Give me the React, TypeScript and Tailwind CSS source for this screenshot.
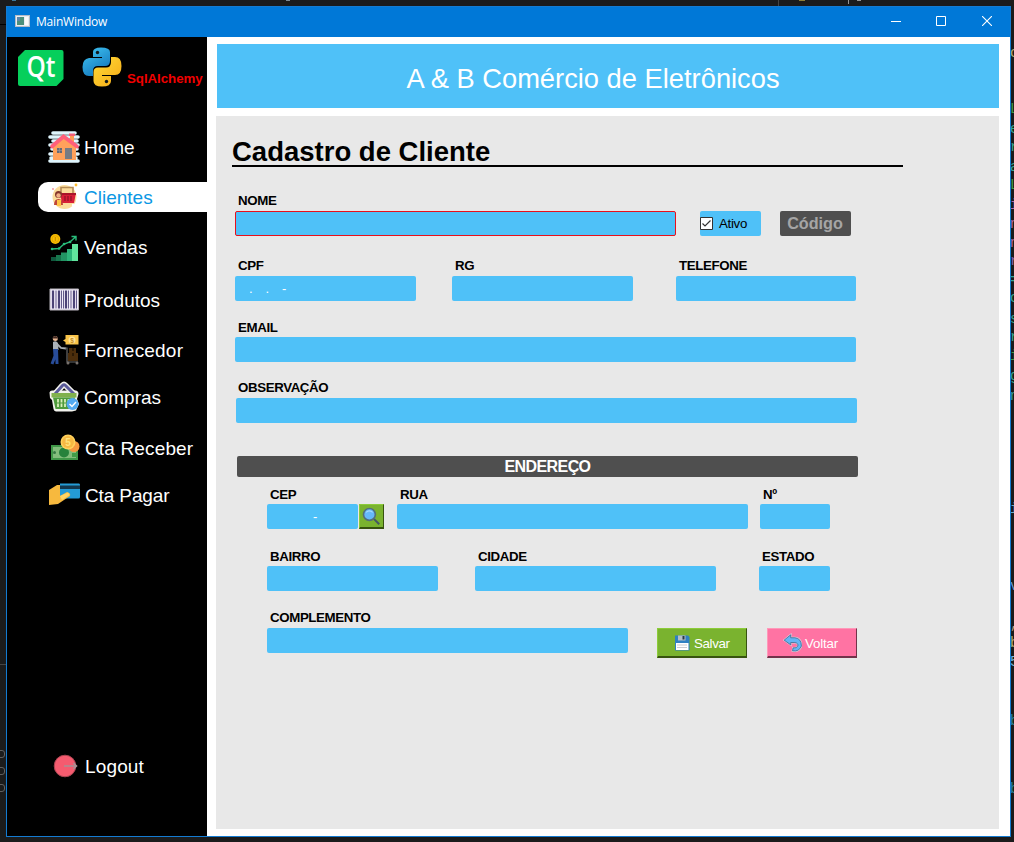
import type { ReactNode } from "react";

const sans = "font-['Liberation_Sans',Arial,sans-serif]";

function Icon({ children, className = "h-8 w-8" }: { children: ReactNode; className?: string }) {
  return (
    <svg viewBox="0 0 32 32" className={`shrink-0 ${className}`} fill="none">
      {children}
    </svg>
  );
}

function AppIcon() {
  return (
    <svg viewBox="0 0 15 12" className="mb-0.5 h-3 w-[15px]">
      <rect width="15" height="12" fill="#e9edf2" />
      <rect x="0.5" y="0.5" width="14" height="11" fill="none" stroke="#b4bcc6" />
      <rect x="2" y="2" width="7" height="8" fill="#4b8f7c" />
      <rect x="2" y="2" width="3" height="4" fill="#5b86aa" />
      <rect x="10" y="2" width="3" height="8" fill="#fafafa" />
    </svg>
  );
}

function QtLogo() {
  return (
    <svg viewBox="0 0 46 37" className="h-[37px] w-[46px]">
      <path d="M7 0H43.500Q45.500 0 45.500 2V29L38.500 36H2Q0 36 0 34V7Z" fill="#06cf5b" />
      <text x="8.500" y="27" fontFamily="Open Sans, sans-serif" fontSize="28" fontWeight="600" fill="#fff" textLength="29" lengthAdjust="spacingAndGlyphs">Qt</text>
    </svg>
  );
}

function PythonLogo() {
  return (
    <svg viewBox="0 0 40 40" className="h-10 w-10">
      <defs>
        <linearGradient id="pyBlue" x1="0" y1="0" x2="0.6" y2="1">
          <stop stopColor="#42c8f5" />
          <stop offset="1" stopColor="#1478bd" />
        </linearGradient>
        <linearGradient id="pyGold" x1="0" y1="0" x2="1" y2="1">
          <stop stopColor="#ffdc39" />
          <stop offset="1" stopColor="#f6a915" />
        </linearGradient>
      </defs>
      <path d="M11 5Q11 .5 19 .5Q28 .5 28 5V14Q28 19 23 19H16Q11 19 11 24V29H7Q.5 29 .5 20Q.5 12 7 11H20V10H11Z" fill="url(#pyBlue)" />
      <path d="M29 10H33Q39.500 10 39.500 19Q39.500 28 33 28H20V29H29V34Q29 39.500 20 39.500Q11.500 39.500 11.500 34V25Q11.500 20.500 16 20.500H24Q29 20.500 29 15Z" fill="url(#pyGold)" />
      <circle cx="15.500" cy="5.500" r="1.700" fill="#11191d" />
      <circle cx="24.500" cy="34.500" r="1.700" fill="#11191d" />
    </svg>
  );
}

const HomeIcon = () => (
  <Icon>
    <path d="M5 2H27M2 6H30M5 10H29M2 14H30M4 18H29M2 23H30M3 27H28M2 30H30" stroke="#dff5fd" strokeWidth="3.600" strokeLinecap="round" />
    <path d="M22 3H26V11H22Z" fill="#ff9b52" />
    <path d="M21 2.500H27V5H21Z" fill="#f45f78" />
    <path d="M5 15L16 6L28 15V29H5Z" fill="#ffa15b" />
    <path d="M4 15.500L15.500 5.500L29 15.500" stroke="#ff5f7a" strokeWidth="3.800" strokeLinecap="round" />
    <path d="M17 17H24V28H17Z" fill="#777b83" />
    <path d="M9 17H14V22H9Z" fill="#656975" />
    <path d="M11.500 17V22M9 19.500H14" stroke="#9a9298" strokeWidth=".7" />
  </Icon>
);

const ClientsIcon = () => (
  <Icon>
    <circle cx="16.500" cy="16" r="12" fill="#fbdc9b" />
    <path d="M13 14V6.500H25V14" stroke="#b48a55" strokeWidth="1.600" />
    <path d="M12 12H28L26 22H14Z" fill="#d81e37" />
    <path d="M12 12H28V14H12Z" fill="#a91429" />
    <path d="M17 15V20M20 15V20M23 15V20" stroke="#8e1327" strokeWidth="1.200" />
    <circle cx="10.500" cy="13.500" r="3.500" fill="#83362c" />
    <circle cx="10.500" cy="14.500" r="2.200" fill="#f3b085" />
    <path d="M6 24Q6 18 10.500 18Q15 18 15 24Z" fill="#bf4639" />
    <path d="M9 19H13V25H9Z" fill="#ffc446" />
    <circle cx="28" cy="4" r="1.400" fill="#ffbd31" />
    <circle cx="5" cy="8" r=".8" fill="#eb5161" />
    <circle cx="25" cy="24" r="1.200" fill="#fff" />
  </Icon>
);

const SalesIcon = () => (
  <Icon>
    <path d="M3 26H8V30H3Z" fill="#10593e" />
    <path d="M8 24H13V30H8Z" fill="#17764d" />
    <path d="M13 21.500H19V30H13Z" fill="#229463" />
    <path d="M19 18H24V30H19Z" fill="#2db47a" />
    <path d="M24 13H30V30H24Z" fill="#61e49e" />
    <circle cx="7.300" cy="8" r="5" fill="#f9be02" />
    <circle cx="7.300" cy="8" r="3.300" stroke="#dda100" strokeWidth=".8" />
    <path d="M7.300 6V10" stroke="#c98c00" strokeWidth="1" />
    <path d="M4 18L11 17.500L16 13L22 11L28 5.500M23.500 5.500H28V9.500" stroke="#28bd7b" strokeWidth="1.400" />
    <path d="M4 18h.1M11 17.500h.1M16 13h.1M22 11h.1" stroke="#28bd7b" strokeWidth="2.600" strokeLinecap="round" />
  </Icon>
);

const BarcodeIcon = () => (
  <Icon>
    <path d="M2 5H30.500V26H2Z" fill="#f2eefa" stroke="#b7b2bb" strokeWidth="1" />
    <path d="M5 6.500V24.500M11 6.500V24.500M18 6.500V24.500M26 6.500V24.500" stroke="#4c4477" strokeWidth="2.200" />
    <path d="M8 6.500V24.500M13.500 6.500V24.500M15.500 6.500V24.500M20.500 6.500V24.500M23 6.500V24.500M28.500 6.500V24.500" stroke="#645b8b" strokeWidth="1" />
  </Icon>
);

const SupplierIcon = () => (
  <Icon>
    <path d="M17.500 1H30.500V10.500H17.500V8L15 6.500L17.500 5Z" fill="#f9c449" />
    <circle cx="24" cy="6" r="3.500" fill="#ffe395" />
    <text x="22.300" y="8.500" fontFamily="Liberation Sans, sans-serif" fontSize="6.500" fontWeight="700" fill="#c68c20">$</text>
    <circle cx="7.300" cy="4.500" r="2.500" fill="#e9b994" />
    <path d="M4.800 3.500Q7 .5 10 3.500V4.500H5Z" fill="#442a22" />
    <path d="M5 8Q8 6 10 9L10.500 16H5Z" fill="#aab2b9" />
    <path d="M9 10L13 14L18 14.500" stroke="#a9aeb2" strokeWidth="1.800" />
    <path d="M6.500 15L7 22L4 30M8.500 15L9 30" stroke="#284c99" strokeWidth="3" />
    <path d="M17 14H19V28H30" stroke="#696969" strokeWidth="1.200" />
    <path d="M21 14H28V19H21Z" fill="#4b2d0b" />
    <path d="M20 19H30V27H20Z" fill="#4c2e0c" />
    <path d="M24 14H26V17H24ZM24 19H26V22H24Z" fill="#2c1a05" />
    <circle cx="20" cy="29" r="1.500" fill="#78716c" />
    <circle cx="29" cy="29" r="1.500" fill="#78716c" />
  </Icon>
);

const BasketIcon = () => (
  <Icon>
    <path d="M7 13L14.500 4.500Q16 3 17.500 4.500L26 13" stroke="#f2f2ed" strokeWidth="6" strokeLinejoin="round" />
    <path d="M1.500 11.500Q2 9.500 4 9.500H28Q30.500 10 30.500 13L29 18L31 23L28 29.500L24 30.500H8Q6 30 5.500 28L4 19L2 17Z" fill="#f2f2ed" />
    <path d="M7 13L14.500 4.500Q16 3 17.500 4.500L26 13" stroke="#5b5b9a" strokeWidth="3" />
    <path d="M3.500 12H28.500V16.500H3.500Z" fill="#81b14d" />
    <path d="M5 16.500H27L25 28H7.500Z" fill="#4f9b3c" />
    <path d="M10 18V26M13.500 18V26M17 18V26M20.500 18V26" stroke="#d9efbb" strokeWidth="1.800" />
    <path d="M8 22H22" stroke="#4f9b3c" strokeWidth="1" />
    <circle cx="24.500" cy="23" r="6" fill="#53aaf1" />
    <path d="M21.500 23L24 25.500L28 21" stroke="#fff" strokeWidth="1.400" />
  </Icon>
);

const CashIcon = () => (
  <Icon>
    <path d="M3 13H30V28H3Z" fill="#3f9747" />
    <path d="M5 15H28V26H5Z" fill="#82bd7b" />
    <circle cx="16" cy="20.500" r="5" fill="#26823b" />
    <circle cx="6.500" cy="20.500" r="1.500" fill="#367844" />
    <path d="M24 21H29V25H24Z" fill="#419c48" />
    <circle cx="26" cy="14.500" r="5.500" fill="#f5993f" />
    <circle cx="20" cy="10" r="7.500" fill="#ffd15c" />
    <circle cx="20" cy="10" r="5.900" fill="#f6b943" />
    <text x="17.300" y="13.500" fontFamily="Liberation Sans, sans-serif" fontSize="10" fontWeight="700" fill="#ffe27b">5</text>
  </Icon>
);

const PayIcon = () => (
  <Icon>
    <path d="M12 4.500H31Q32 4.500 32 6V18Q32 19.500 30.500 19.500H14Q12 19.500 12 17.500Z" fill="#249bd6" />
    <path d="M12 6.500H32V10H12Z" fill="#12384f" />
    <path d="M1 11L9 6H12V17L19 13Q23 14 22 17L16 21L10 25L1 26Z" fill="#f7b93e" />
    <path d="M12 17L20 13.500Q22 15 21 16.500L14 21Z" fill="#ffd564" />
  </Icon>
);

const LogoutIcon = () => (
  <Icon>
    <circle cx="17" cy="16" r="10.800" fill="#f55b6f" stroke="#a64450" />
    <path d="M16 16H28M25.500 13L28.500 16L25.500 19" stroke="#a79195" strokeWidth="1.600" />
  </Icon>
);

function NavItem({ icon, label, gap, active = false, shift = false }: { icon: ReactNode; label: string; gap: string; active?: boolean; shift?: boolean }) {
  return (
    <a className={`flex h-[30px] shrink-0 items-center rounded-l-[10px] pl-2.5 text-[19px] leading-[30px] ${gap} ${active ? "bg-white text-[#0a97e4]" : "text-white"}`}>
      {icon}
      <span className={`pt-0.5 ${shift ? "ml-[5px]" : "ml-1"}`}>{label}</span>
    </a>
  );
}

function Field({ label, width, offset = "", low = false, children, error = false, labelPad = "pl-[3px]" }: { label: string; width: string; offset?: string; low?: boolean; children?: ReactNode; error?: boolean; labelPad?: string }) {
  return (
    <label className={`flex shrink-0 flex-col ${width} ${offset}`}>
      <span className={`h-[19px] text-[13.300px] font-bold tracking-[-0.380px] whitespace-nowrap ${labelPad} ${low ? "leading-[20px]" : "leading-[18px]"}`}>{label}</span>
      <span className={`block h-[25px] overflow-hidden rounded-[2px] bg-[#4fc1f8] text-[13px] leading-[26px] whitespace-pre text-white ${error ? "border border-[#e8101c]" : ""}`}>{children}</span>
    </label>
  );
}

const bevelGreen = "border-t border-l border-r border-b-2 border-t-[#8ccc39] border-l-[#8ccc39] border-r-[#37530f] border-b-[#37530f] bg-[#7ab32f]";

const fragments = [
  { t: "o", y: "top-[44px]", c: "text-[#b5ad79]" },
  { t: "L", y: "top-[100px]", c: "text-[#3f9b45]" },
  { t: "e", y: "top-[120px]", c: "text-[#35a38d]" },
  { t: "r", y: "top-[138px]", c: "text-[#35a38d]" },
  { t: "a", y: "top-[158px]", c: "text-[#35a38d]" },
  { t: "L", y: "top-[176px]", c: "text-[#3f9b45]" },
  { t: "i", y: "top-[196px]", c: "text-[#b369aa]" },
  { t: "n", y: "top-[215px]", c: "text-[#b369aa]" },
  { t: "n", y: "top-[234px]", c: "text-[#b369aa]" },
  { t: "r", y: "top-[252px]", c: "text-[#8c60ab]" },
  { t: "=", y: "top-[271px]", c: "text-[#35a38d]" },
  { t: "o", y: "top-[289px]", c: "text-[#35a38d]" },
  { t: "s", y: "top-[310px]", c: "text-[#35a38d]" },
  { t: "r", y: "top-[328px]", c: "text-[#35a38d]" },
  { t: "i", y: "top-[347px]", c: "text-[#3f9b45]" },
  { t: "g", y: "top-[367px]", c: "text-[#35a38d]" },
  { t: "n", y: "top-[387px]", c: "text-[#359b9b]" },
  { t: "i", y: "top-[500px]", c: "text-[#6aaec9]" },
  { t: "v", y: "top-[577px]", c: "text-[#6995d2]" },
  { t: ",", y: "top-[615px]", c: "text-[#b89a83]" },
  { t: "b", y: "top-[634px]", c: "text-[#b5ad79]" },
  { t: "5", y: "top-[653px]", c: "text-[#76b6dc]" },
  { t: "b", y: "top-[712px]", c: "text-[#2a829c]" },
  { t: "b", y: "top-[780px]", c: "text-[#2a829c]" },
];

export default function App() {
  return (
    <div className={`relative h-[842px] w-[1014px] overflow-hidden bg-[#1b1b1b] pt-1.5 pl-1.5 ${sans}`}>
      <div className="absolute top-0 left-3 h-px w-1 bg-[#3c779a]" />
      <div className="absolute top-0 left-[286px] h-px w-1 bg-[#7e8b95]" />
      <div className="absolute top-0 left-[778px] h-1.5 w-px bg-[#454545]" />
      <div className="absolute top-0 left-[799px] h-px w-1.5 bg-[#8e7e34]" />
      <div className="absolute top-0 left-[848px] h-1 w-px bg-[#969696]" />
      <div className="absolute top-0 left-[857px] h-px w-1 bg-[#969696]" />
      <div className="absolute top-6 left-0 h-px w-1.5 bg-black" />
      <div className="absolute top-[664px] left-0 h-px w-1.5 bg-[#454545]" />
      <div className="absolute top-[750px] -left-[3px] h-2 w-2 rounded-[3px] border border-[#606060]" />
      <div className="absolute top-[767px] -left-[3px] h-2 w-2 rounded-[3px] border border-[#606060]" />
      <div className="absolute top-[784px] -left-[3px] h-2 w-2 rounded-[3px] border border-[#606060]" />
      {fragments.map((f) => (
        <span key={f.y} className={`absolute left-[1010px] font-['Liberation_Mono',monospace] text-[14px] leading-[18px] ${f.y} ${f.c}`}>{f.t}</span>
      ))}

      <main className="relative flex h-[831px] w-[1005px] flex-col border border-[#147bd1] bg-white">
        <header className="flex h-[30px] shrink-0 items-center bg-[#0078d7] pl-2 text-white">
          <AppIcon />
          <span className="ml-1.5 font-['Open_Sans',sans-serif] text-[12px] tracking-[-0.200px]">MainWindow</span>
          <div className="mr-[18px] mb-0.5 ml-auto flex items-center">
            <svg viewBox="0 0 10 10" className="mr-[35px] h-2.5 w-2.5"><path d="M0 5.500H10" stroke="#fff" /></svg>
            <svg viewBox="0 0 10 10" className="mr-9 h-2.5 w-2.5"><path d="M.5.5H9.500V9.500H.5Z" fill="none" stroke="#fff" /></svg>
            <svg viewBox="0 0 10 10" className="h-2.5 w-2.5"><path d="M0 0L10 10M10 0L0 10" stroke="#fff" strokeWidth="1.100" /></svg>
          </div>
        </header>

        <div className="flex min-h-0 flex-1">
          <aside className="flex w-[200px] shrink-0 flex-col bg-black">
            <div className="flex h-[58px] shrink-0 pl-[11px]">
              <div className="pt-[13px]"><QtLogo /></div>
              <div className="ml-[18px] pt-2.5"><PythonLogo /></div>
              <span className="ml-[5px] pt-[34px] text-[13.300px] leading-4 font-bold tracking-[-0.050px] text-[#f00000]">SqlAlchemy</span>
            </div>
            <nav className="flex flex-1 flex-col pt-[37px] pl-[31px]">
              <NavItem icon={<HomeIcon />} label="Home" gap="" />
              <NavItem icon={<ClientsIcon />} label="Clientes" gap="mt-5" active />
              <NavItem icon={<SalesIcon />} label="Vendas" gap="mt-5" />
              <NavItem icon={<BarcodeIcon />} label="Produtos" gap="mt-[23px]" />
              <NavItem icon={<SupplierIcon />} label="Fornecedor" gap="mt-5 tracking-[0.200px]" />
              <NavItem icon={<BasketIcon />} label="Compras" gap="mt-[17px]" />
              <NavItem icon={<CashIcon />} label="Cta Receber" gap="mt-[21px] tracking-[0.150px]" shift />
              <NavItem icon={<PayIcon />} label="Cta Pagar" gap="mt-[17px] tracking-[-0.120px]" shift />
              <NavItem icon={<LogoutIcon />} label="Logout" gap="mt-auto mb-[55px] tracking-[0.150px]" shift />
            </nav>
          </aside>

          <div className="flex flex-1 flex-col pt-[7px] pl-[9px]">
            <h1 className="ml-px flex h-16 w-[782px] shrink-0 items-center justify-center bg-[#4fc1f8] pt-[7px] pr-[30px] text-[27.300px] text-white">A &amp; B Comércio de Eletrônicos</h1>
            <section className="mt-2 h-[713px] w-[783px] bg-[#e8e8e8] pt-[18px] pl-4 text-black">
              <h2 className="h-[33px] w-[671px] border-b-2 border-black text-[27.500px] leading-[35px] font-bold">Cadastro de Cliente</h2>

              <div className="mt-[25px] flex h-11 items-end pl-[3px]">
                <Field label="NOME" width="w-[441px]" error />
                <span className="ml-6 flex h-[25px] w-[61px] items-center rounded-[2px] bg-[#4fc1f8] text-[13.300px]">
                  <svg viewBox="0 0 13 13" className="h-[13px] w-[13px]">
                    <path d="M.5.5H12.500V12.500H.5Z" fill="#fff" stroke="#333" />
                    <path d="M2.500 6.500L5 9L10.500 3.500" fill="none" stroke="#333" strokeWidth="1.200" />
                  </svg>
                  <span className="ml-1.5 tracking-[-0.300px]">Ativo</span>
                </span>
                <span className="ml-[19px] flex h-[25px] w-[71px] items-center justify-center rounded-[2px] bg-[#4f4f4f] pr-px text-[16.200px] font-bold text-[#a5a5a5]">Código</span>
              </div>

              <div className="mt-[21px] flex pl-[3px]">
                <Field label="CPF" width="w-[181px]"><span className="pl-3.5 tracking-[0.500px]">{".   .   -"}</span></Field>
                <Field label="RG" width="w-[181px]" offset="ml-9" />
                <Field label="TELEFONE" width="w-[180px]" offset="ml-[43px]" />
              </div>
              <div className="mt-[17px] flex pl-[3px]">
                <Field label="EMAIL" width="w-[621px]" low />
              </div>
              <div className="mt-[17px] flex pl-1">
                <Field label="OBSERVAÇÃO" width="w-[621px]" labelPad="pl-0.5" />
              </div>

              <h3 className="mt-[33px] ml-[5px] h-[21px] w-[621px] rounded-[2px] bg-[#4f4f4f] text-center text-[16px] leading-[21px] font-bold tracking-[-0.600px] text-white">ENDEREÇO</h3>

              <div className="mt-2 flex items-end pl-[35px]">
                <Field label="CEP" width="w-[91px]" low><span className="pl-[46px]">-</span></Field>
                <button className={`ml-px flex h-[25px] w-[25px] items-center justify-center ${bevelGreen}`}>
                  <Icon className="h-[19px] w-[19px]">
                    <path d="M20 20L29 29" stroke="#455865" strokeWidth="3.500" />
                    <circle cx="12.500" cy="12.500" r="10" fill="#66b8fa" stroke="#546e7a" strokeWidth="2.800" />
                    <path d="M7 9Q12 4 18 9" stroke="#aadcff" strokeWidth="2" />
                  </Icon>
                </button>
                <Field label="RUA" width="w-[351px]" offset="ml-[13px]" low />
                <Field label="Nº" width="w-[70px]" offset="ml-3" low />
              </div>
              <div className="mt-[18px] flex pl-[35px]">
                <Field label="BAIRRO" width="w-[171px]" low />
                <Field label="CIDADE" width="w-[241px]" offset="ml-[37px]" low />
                <Field label="ESTADO" width="w-[71px]" offset="ml-[43px]" low />
              </div>
              <div className="mt-[18px] flex pl-[35px]">
                <Field label="COMPLEMENTO" width="w-[361px]" />
                <button className={`mt-[19px] ml-[29px] flex h-[30px] w-[90px] items-center pl-4 text-[13.300px] text-white ${bevelGreen}`}>
                  <Icon className="h-4 w-4">
                    <path d="M2 1H28L31 4V31H2Z" fill="#2f80c2" />
                    <path d="M8 1H23V11H8Z" fill="#b5bec5" />
                    <path d="M17 2H21V9H17Z" fill="#263846" />
                    <path d="M4 16H29V30H4Z" fill="#fff" />
                    <path d="M6 20H26M6 25H26" stroke="#c9cbd0" strokeWidth="2" />
                  </Icon>
                  <span className="ml-1 pt-0.5 tracking-[-0.350px]">Salvar</span>
                </button>
                <button className="mt-[19px] ml-5 flex h-[30px] w-[90px] items-center border-t border-r border-b-2 border-l border-t-[#ff98b9] border-r-[#71334a] border-b-[#71334a] border-l-[#ff98b9] bg-[#ff73a3] pl-[15px] text-[13.300px] text-white">
                  <Icon className="h-[19px] w-[19px]">
                    <path d="M13 3L2 12L13 20V16H20Q26 17 25 22Q23 26 17 25L16 30Q27 32 31 22Q31 9 20 8H13Z" fill="#64b5f6" stroke="#d9d3df" strokeWidth="3" />
                    <path d="M13 3L2 12L13 20V16H20Q26 17 25 22Q23 26 17 25L16 30Q27 32 31 22Q31 9 20 8H13Z" fill="#64b5f6" stroke="#3d638b" strokeWidth="1.300" />
                  </Icon>
                  <span className="ml-[3px] pt-0.5 tracking-[-0.150px]">Voltar</span>
                </button>
              </div>
            </section>
          </div>
        </div>
      </main>
    </div>
  );
}
